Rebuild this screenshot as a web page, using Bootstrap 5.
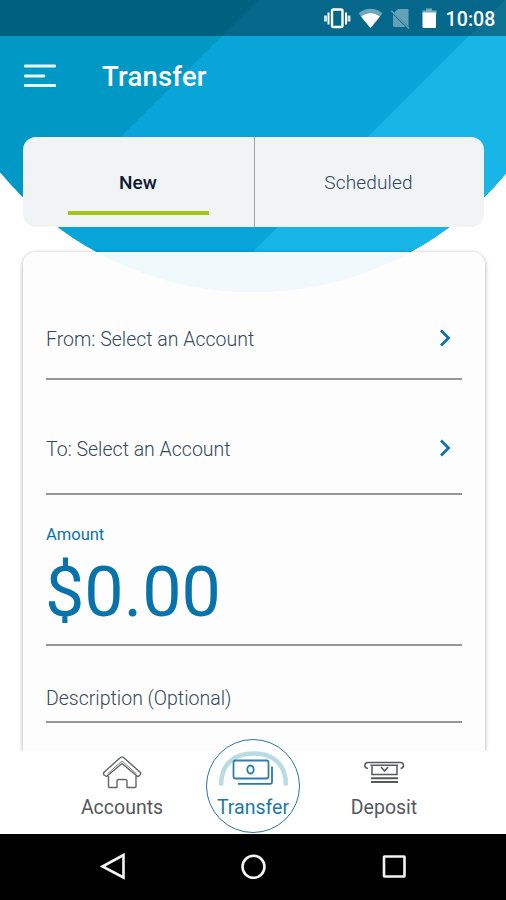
<!DOCTYPE html>
<html lang="en">
<head>
<meta charset="utf-8">
<meta name="viewport" content="width=device-width, initial-scale=1">
<title>Transfer</title>
<link href="https://cdn.jsdelivr.net/npm/bootstrap@5.3.0/dist/css/bootstrap.min.css" rel="stylesheet">
<style>
body{font-family:Roboto,"Liberation Sans",sans-serif;background:#fff;color:#3c4f5c}
.phone{width:506px;height:900px;isolation:isolate}
.backdrop{z-index:-1}
.status{height:36px;padding-right:10.5px;background:rgba(0,20,30,.42)}
.clock{font-size:19.5px;font-weight:500;line-height:32px;padding-top:4px;letter-spacing:.1px;margin-left:6px}
.topbar{height:101px;padding:0 24px 19px}
.topbar svg{margin-top:-2px}
.screen-title{font-size:27.500px;font-weight:500;line-height:32px;margin-left:46px;letter-spacing:.2px}
.tabs{height:90px;margin:0 22px 0 23px;border-radius:13px;background:#f1f3f5}
.tab-item{border:0;background:none;font-size:19px;font-weight:300;color:#2c4661;padding:3px 2px 0 0;letter-spacing:.15px}
.tab-item.current{font-weight:500;color:#0a1a33;border-right:1px solid #a0a4a8;flex-basis:232px;padding-right:1px}
.tab-item.current::after{content:"";position:absolute;left:45px;width:141px;bottom:12px;height:4px;background:#a2c516}
.form-card{margin:25px 21px 0 23px;height:499px;padding:0 23px;border-radius:13px 13px 0 0;background:rgba(253,253,253,.95);box-shadow:0 1px 4px rgba(0,0,0,.36);clip-path:inset(-5px -8px 0 -8px)}
.field{border-bottom:2px solid #959799;font-size:19.5px;font-weight:300;line-height:24px;color:#34495a}
.f-from{height:128px;padding-bottom:26px}
.f-to{height:115px;padding-bottom:31px}
.field .go{margin-bottom:1px}
.f-amount{height:151px;padding-top:30px;color:#0873aa}
.f-desc{height:77px;padding-bottom:10px}
.cap{font-size:16.5px;line-height:20px;font-weight:400}
.sum{font-size:70px;line-height:84px;font-weight:400;margin:5px 0 0 -1px}
.bottom-nav{height:83px;background:#fff}
.tab-link{width:131px;font-size:19.5px;line-height:24px;color:#55585b;text-decoration:none}
.tab-link svg{display:block;margin-bottom:1.500px}
.tab-link.on{color:#1c79a9}
.ring{width:94px;height:94px;border:1.5px solid #2a75a8;border-radius:50%;background:#fff;top:-12px;left:18px}
.softkeys{height:66px;background:#000;border-top:0}
</style>
<script src="https://cdn.jsdelivr.net/npm/bootstrap@5.3.0/dist/js/bootstrap.bundle.min.js"></script>
</head>
<body>
<div class="phone position-relative overflow-hidden d-flex flex-column">
  <svg class="backdrop position-absolute top-0 start-0" width="506" height="300" viewBox="0 0 506 300" aria-hidden="true">
    <defs><clipPath id="dome"><circle cx="253.5" cy="-36" r="328"/></clipPath></defs>
    <g clip-path="url(#dome)">
      <path fill="#0099c5" d="M0 0H506V300H0z"/>
      <path fill="#0aa5d8" d="M258 0H506V300H-42z"/>
      <path fill="#18b6e6" d="M505 0H506V300H205z"/>
    </g>
  </svg>

  <div class="status d-flex align-items-center justify-content-end text-white">
    <svg width="118" height="36" viewBox="322 0 118 36" aria-hidden="true">
      <g fill="#fff">
        <path opacity=".8" d="M324 15.500h3v6h-3zM347.500 15.500h3v6h-3z"/>
        <path d="M327.500 12.500h2v12h-2zM345 12.500h2v12h-2z"/>
        <rect x="332" y="9.500" width="10.500" height="17.500" rx="1.500" fill="none" stroke="#fff" stroke-width="2.400"/>
        <path opacity=".42" d="M358.500 13.200Q370.500 4.500 382.500 13.200L370.500 28z"/>
        <path d="M361 16.500Q370.500 9.500 380 16.500L370.500 28z"/>
        <g opacity=".38"><path d="M398 9H408.500V26.500L394 12.800z"/><path d="M393 14.500L405.500 27H394.500Q393 27 393 25.500z"/><path d="M391.500 11L409 28.500" stroke="#fff" stroke-width="1.500"/></g>
        <path opacity=".45" d="M426 8.500h6v2h4.500v4H422.500v-4H426z"/>
        <rect x="422.500" y="12.500" width="13.500" height="15.500" rx="1"/>
      </g>
    </svg>
    <span class="clock">10:08</span>
  </div>

  <header class="topbar d-flex align-items-center text-white">
    <svg width="32" height="24" viewBox="0 0 32 24" aria-label="Menu"><path d="M1 2H31M1 12H20M1 21.500H31" stroke="#e9faff" stroke-width="2.800" stroke-linecap="round"/></svg>
    <h1 class="screen-title mb-0">Transfer</h1>
  </header>

  <div class="tabs d-flex flex-shrink-0">
    <button class="tab-item current position-relative flex-shrink-0">New</button>
    <button class="tab-item flex-fill">Scheduled</button>
  </div>

  <main class="form-card flex-shrink-0">
    <div class="field f-from d-flex align-items-end justify-content-between"><span>From: Select an Account</span>
      <svg class="go me-2" width="16" height="26" viewBox="0 0 16 26"><path d="M3 5.500L10.500 13L3 20.500" fill="none" stroke="#126fa8" stroke-width="2.800"/></svg></div>
    <div class="field f-to d-flex align-items-end justify-content-between"><span>To: Select an Account</span>
      <svg class="go me-2" width="16" height="26" viewBox="0 0 16 26"><path d="M3 5.500L10.500 13L3 20.500" fill="none" stroke="#126fa8" stroke-width="2.800"/></svg></div>
    <div class="field f-amount"><div class="cap">Amount</div><div class="sum">$0.00</div></div>
    <div class="field f-desc d-flex align-items-end"><span>Description (Optional)</span></div>
  </main>

  <nav class="bottom-nav d-flex justify-content-center flex-shrink-0 position-relative">
    <a href="#" class="tab-link d-flex flex-column align-items-center">
      <svg width="42" height="43" viewBox="101 751 42 43" fill="none" stroke="#626466" stroke-width="1.400" stroke-linejoin="round"><path d="M122 763.500L137.500 776.500L139 776Q141 774.500 140.500 772.500L123.500 757.500Q122 756.300 120.500 757.500L104 772.200Q103 773.500 104 775L106.500 776.500z"/><path d="M107.500 773.800L122 761L136.500 773.800" stroke-width=".8"/><path d="M108.500 776V786.500Q108.500 787.500 109.500 787.500H117V781Q117 779.500 118.500 779.500H125.500Q127 779.500 127 781V787.500H135Q136 787.500 136 786.500V776"/></svg>
      <span>Accounts</span></a>
    <a href="#" class="tab-link on position-relative d-flex flex-column align-items-center">
      <span class="ring position-absolute"></span>
      <svg class="position-relative" width="72" height="43" viewBox="217 751 72 43" fill="none"><path d="M221 785.500C221 763 235 753.500 253.500 753.500S286 763 286 785.500" stroke="#b9dce3" stroke-width="4.500"/><rect x="233.500" y="760.500" width="35" height="18" rx="2" fill="#fff" fill-opacity=".55" stroke="#337fa8" stroke-width="1.800"/><ellipse cx="250.500" cy="769.500" rx="3.200" ry="4" stroke="#257ca9" stroke-width="1.800"/><path d="M238 783.800H270.500Q272 783.800 272 782.300V766.500" stroke="#257ca9" stroke-width="1.800"/></svg>
      <span class="position-relative">Transfer</span></a>
    <a href="#" class="tab-link d-flex flex-column align-items-center">
      <svg width="42" height="43" viewBox="363 751 42 43" fill="none" stroke="#55595c" stroke-width="1.500"><path d="M368 768.500Q364.800 768 364.800 765.500Q364.800 762.500 368 762.500H400.500Q403.500 762.500 403.500 765.500Q403.500 768 400.500 768.500M370.500 765.300H398"/><path d="M372 766V774.500H397V766M381 767L384.500 771L388 767"/><path d="M371 778.200H398M371 782H398" stroke-width="2"/></svg>
      <span>Deposit</span></a>
  </nav>

  <footer class="softkeys flex-shrink-0">
    <svg width="506" height="66" viewBox="0 834 506 66" fill="none" stroke="#f4f4f4" stroke-width="2.600"><path d="M102.500 866.500L123.500 855V877.500z"/><circle cx="253.500" cy="866.800" r="11"/><rect x="384" y="856.500" width="20.500" height="20" rx=".5"/></svg>
  </footer>
</div>
</body>
</html>
